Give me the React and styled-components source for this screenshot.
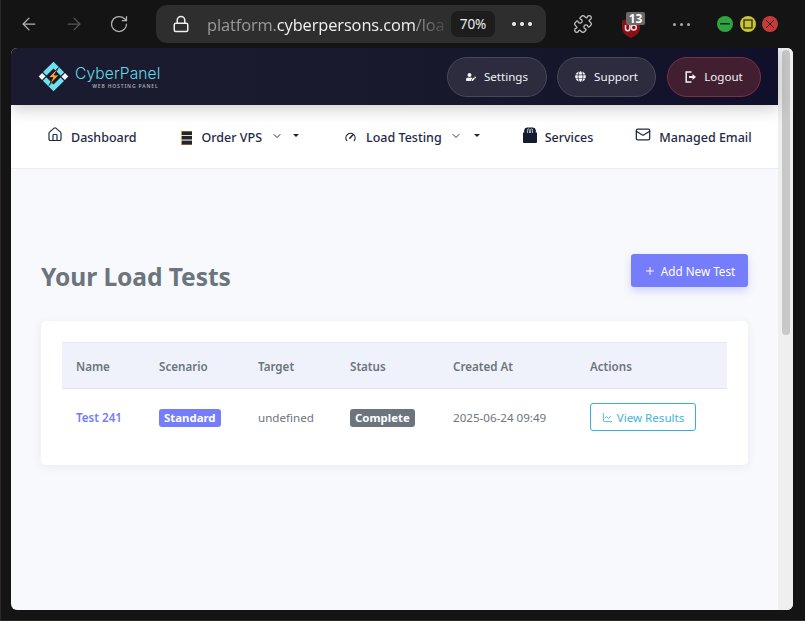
import React from 'react';
import styled, { createGlobalStyle } from 'styled-components';
import { ArrowLeft, ArrowRight, RotateCw, Lock, Puzzle, House, Mail, ChevronDown, Plus, ChartLine } from 'lucide-react';
import { FaUserEdit, FaGlobe } from 'react-icons/fa';

const Global = createGlobalStyle`
  html, body { margin: 0; padding: 0; background: #141414; overflow: hidden; }
  * { box-sizing: border-box; }
  body { font-family: "Noto Sans", "Open Sans", sans-serif; }
`;
const Screen = styled.div`
  width: 805px; height: 621px; background: #141414; display: flex; flex-direction: column;
  border-left: 1px solid #2a2a2a; border-bottom: 1px solid #2a2a2a; overflow: hidden;
`;
const Toolbar = styled.div`
  height: 48px; flex: none; display: flex; align-items: center; padding: 0 0 0 18px; color: #c4c4c4;
`;
const NavGlyph = styled.span`
  display: flex; width: 20px; margin-right: ${p => p.$gap}px; color: ${p => p.$color || '#b4b4b4'};
`;
const AddressBar = styled.div`
  width: 390px; height: 38px; background: #2e2e2e; border-radius: 11px;
  display: flex; align-items: center; padding: 0 16px 0 16px; flex: none; margin-left: 1px;
`;
const LockBox = styled.span`display: flex; color: #eee; margin-right: 17px;`;
const Url = styled.div`
  width: 238px; flex: none; white-space: nowrap; overflow: hidden; font-size: 16.4px; color: #9a9a9a; font-family: "Open Sans", sans-serif;
  letter-spacing: -0.1px;
  -webkit-mask-image: linear-gradient(to right, #000 88%, rgba(0,0,0,.2) 100%);
  mask-image: linear-gradient(to right, #000 88%, rgba(0,0,0,.2) 100%);
  b { font-weight: 400; color: #f0f0f0; }
`;
const ZoomPill = styled.div`
  margin-left: 6px; width: 44px; height: 26px; border-radius: 7px; background: #1d1d1d; color: #eee;
  font-size: 13.5px; display: flex; align-items: center; justify-content: center; flex: none;
`;
const Dots = styled.div`
  display: flex; gap: ${p => p.$gap}px; margin-left: ${p => p.$left}px; flex: none;
  i { display: block; width: ${p => p.$size}px; height: ${p => p.$size}px; border-radius: 50%; background: ${p => p.$color}; }
`;
const ExtIcon = styled.span`display: flex; margin-left: 27px; color: #c8c8c8; flex: none;`;
const Shield = styled.span`position: relative; display: flex; margin-left: 29px; flex: none; width: 18px; height: 20px; top: 4px;`;
const Badge = styled.span`
  position: absolute; top: -6px; left: 4px; width: 19px; height: 13px; background: #6a6a6a; color: #fff; border-radius: 2px;
  font-size: 12px; font-weight: 700; line-height: 13px; text-align: center;
`;
const WinButtons = styled.div`display: flex; margin-left: 27px; gap: 6.5px; flex: none;`;
const WinBtn = styled.span`
  width: 16px; height: 16px; border-radius: 50%; background: ${p => p.$bg}; display: flex; align-items: center; justify-content: center;
`;
const Frame = styled.div`
  margin-left: 10px; width: 782px; height: 562px; flex: none; border-radius: 6px; overflow: hidden; display: flex; background: #f8f9fc;
`;
const Page = styled.div`width: 767px; flex: none; display: flex; flex-direction: column;`;
const Scrollbar = styled.div`width: 15px; flex: none; background: #efefef; padding: 2px 3px 0 4px;`;
const Thumb = styled.div`height: 285px; background: #c8c8c8; border-radius: 4px;`;
const Header = styled.header`
  height: 57px; flex: none; background: linear-gradient(90deg, #1a1b30 0%, #1a1a2e 45%, #10102a 100%);
  display: flex; align-items: center; padding: 0 17px 0 27px; box-shadow: 0 4px 16px rgba(0,0,0,.2); position: relative; z-index: 1;
`;
const Logo = styled.div`display: flex; align-items: center; gap: 6px; margin-right: auto;`;
const LogoWords = styled.div`display: flex; flex-direction: column; align-items: flex-end; margin-top: 1px;`;
const LogoName = styled.span`font-family: "Inter", sans-serif; font-size: 15.6px; font-weight: 300; color: #66d9e8; line-height: 18px; letter-spacing: .1px;`;
const LogoSub = styled.span`font-size: 5px; font-weight: 600; letter-spacing: .85px; color: #a8a8b4; line-height: 7px; margin-right: 2px;`;
const Pills = styled.div`display: flex; gap: 10px;`;
const Pill = styled.a`
  height: 40px; width: ${p => p.$w}px; border-radius: 20px; display: flex; align-items: center; justify-content: center; gap: 8px;
  font-size: 11.6px; color: #f2f2f5;
  background: ${p => p.$danger ? '#421f30' : '#2c2c3e'}; border: 1px solid ${p => p.$danger ? '#7b2f45' : '#47475a'};
  margin-left: ${p => p.$left || 0}px;
`;
const Nav = styled.nav`
  height: 64px; flex: none; background: #fff; border-bottom: 1px solid #eceef2; display: flex; align-items: center; padding: 0 0 0 36px;
`;
const NavItem = styled.a`
  display: flex; align-items: center; font-size: 12.5px; font-weight: 500; margin: 2px ${p => p.$mr}px 0 0; color: #1e2a45; white-space: nowrap; line-height: 18px;
`;
const NavIcon = styled.span`display: flex; width: ${p => p.$w}px; margin-right: ${p => p.$mr}px; flex: none; position: relative; top: ${p => p.$top ?? -3}px;`;
const Chevron = styled.span`display: flex; margin-left: ${p => p.$ml}px; color: #333; position: relative; top: -2px;`;
const Caret = styled.span`
  margin-left: ${p => p.$ml}px; width: 0; height: 0; border-left: 3.5px solid transparent; border-right: 3.5px solid transparent; border-top: 3.5px solid #222;
  position: relative; top: -2px;
`;
const Main = styled.main`flex: 1; padding: 85px 30px 0 30px;`;
const TitleRow = styled.div`display: flex; justify-content: space-between; align-items: flex-start; margin-bottom: 28px;`;
const Title = styled.h1`margin: 7px 0 0; font-size: 24.6px; font-weight: 700; color: #6c757d; line-height: 32px; letter-spacing: -.1px;`;
const AddButton = styled.button`
  width: 117px; height: 33px; border: none; border-radius: 3px; background: #757dfb; color: #fff; font: inherit; font-size: 11.7px;
  display: flex; align-items: center; justify-content: center; gap: 5px; box-shadow: 0 4px 8px rgba(117,125,251,.3);
`;
const Card = styled.section`
  background: #fff; border-radius: 5px; padding: 21px; height: 144px; box-shadow: 0 2px 10px rgba(60,70,100,.08);
`;
const Table = styled.table`width: 665px; border-collapse: collapse; table-layout: fixed; font-size: 11.6px;`;
const Th = styled.th`
  width: ${p => p.$w}px; height: 46px; padding: 2px 0 0 14px; text-align: left; font-weight: 600; color: #6c757d; background: #eff2fa;
  border-top: 1px solid #e4e9f2; border-bottom: 1px solid #e0e6f0;
`;
const Td = styled.td`height: 58px; padding: 0 0 0 14px; color: #6c757d; white-space: nowrap;`;
const TestLink = styled.a`color: #757dfb; font-weight: 600;`;
const Tag = styled.span`
  display: inline-block; padding: 0 5px; height: 18px; line-height: 18px; border-radius: 3px; font-size: 11.4px; font-weight: 700; color: #fff; background: ${p => p.$bg};
`;
const ResultsButton = styled.a`
  display: inline-flex; vertical-align: middle; margin-top: -1px; align-items: center; gap: 4px; width: 106px; height: 28px; justify-content: center; border: 1px solid #36b0d4; border-radius: 3px; color: #45b4d6; font-size: 11.6px;
`;

const ServerIcon = () => (
  <svg width="11" height="14" viewBox="0 0 11 14">
    <rect x="0" y="0" width="11" height="14" fill="#e8923c" />
    <rect x="1" y="0.5" width="10" height="3.6" fill="#1e2533" />
    <rect x="1" y="5" width="10" height="3.6" fill="#1e2533" />
    <rect x="1" y="9.5" width="10" height="4" fill="#1e2533" />
    <rect x="0" y="4.2" width="11" height=".7" fill="#fff" />
    <rect x="0" y="8.7" width="11" height=".7" fill="#fff" />
  </svg>
);
const GaugeIcon = () => (
  <svg width="12" height="12" viewBox="0 0 12 12" fill="none" stroke="#1e2533">
    <path d="M2.2 10.3A5 5 0 1 1 9.8 10.3" strokeWidth="1.3" />
    <path d="M5.2 7.4 8.4 3.8" strokeWidth="1.6" strokeLinecap="round" />
  </svg>
);
const BagIcon = () => (
  <svg width="14" height="16" viewBox="0 0 14 16">
    <path d="M0 5.5h14V15a1 1 0 0 1-1 1H1a1 1 0 0 1-1-1z" fill="#141b2e" />
    <path d="M1.2 6V3.2A3 3 0 0 1 4 .5h6a3 3 0 0 1 2.8 2.7V6" fill="#141b2e" />
    <path d="M4.4 6V3.5Q4.4 1.8 5.4 1.8T6.4 3.5V6M7.6 6V3.5Q7.6 1.8 8.6 1.8T9.6 3.5V6" fill="none" stroke="#fff" strokeWidth=".7" />
  </svg>
);
const LogoMark = () => (
  <svg width="31" height="31" viewBox="0 0 31 31">
    <g transform="rotate(45 15.5 15.5)">
      <path d="M5 5h15v4.800H9.800v10H5z" fill="#6fe0ee" />
      <path d="M26 26H11v-4.800h10.200v-10H26z" fill="#6fe0ee" />
      <path d="M5 21h4.800v5H5zM21.200 5H26v5h-4.800z" fill="#eafafc" />
    </g>
    <path d="M20.500 6.500 10.500 16.500h4.500l-4 8 10-10.500h-4.700z" fill="#f5a81c" stroke="#14142a" strokeWidth=".8" />
  </svg>
);
const ShieldIcon = () => (
  <svg width="18" height="20" viewBox="0 0 18 20">
    <path d="M9 0 18 2.500V10Q18 16 9 20 0 16 0 10V2.500z" fill="#8a1016" />
    <path d="M3.500 7v3.500a2.200 2.200 0 0 0 4.400 0V7" fill="none" stroke="#f3dcdc" strokeWidth="1.500" />
    <circle cx="11.800" cy="9.500" r="2.500" fill="none" stroke="#f3dcdc" strokeWidth="1.500" />
  </svg>
);
const DoorIcon = () => (
  <svg width="11" height="12" viewBox="0 0 11 12">
    <path d="M6.500 1H1.200v10H6.500" fill="none" stroke="#f4f4f6" strokeWidth="1.500" />
    <path d="M4 5h3.500V3L11 6 7.500 9V7H4z" fill="#f4f4f6" />
  </svg>
);

export default function App() {
  return (
    <>
      <Global />
      <Screen>
        <Toolbar>
          <NavGlyph $gap={25}><ArrowLeft size={20} strokeWidth={1.5} /></NavGlyph>
          <NavGlyph $gap={25} $color="#555"><ArrowRight size={20} strokeWidth={1.5} /></NavGlyph>
          <NavGlyph $gap={26}><RotateCw size={20} strokeWidth={1.5} /></NavGlyph>
          <AddressBar>
            <LockBox><Lock size={18} strokeWidth={2} /></LockBox>
            <Url>platform.<b>cyberpersons.com</b>/loa</Url>
            <ZoomPill>70%</ZoomPill>
            <Dots $gap={4} $left={17} $size={4} $color="#f0f0f0"><i /><i /><i /></Dots>
          </AddressBar>
          <ExtIcon><Puzzle size={20} strokeWidth={1.5} /></ExtIcon>
          <Shield><ShieldIcon /><Badge>13</Badge></Shield>
          <Dots $gap={4} $left={33} $size={3} $color="#aaa"><i /><i /><i /></Dots>
          <WinButtons>
            <WinBtn $bg="#2fa53d"><svg width="10" height="2"><rect width="10" height="1.500" fill="#123" /></svg></WinBtn>
            <WinBtn $bg="#c9c435"><svg width="10" height="10"><rect x="1" y="1" width="8" height="8" fill="none" stroke="#222" strokeWidth="1.200" /></svg></WinBtn>
            <WinBtn $bg="#c43b3b"><svg width="10" height="10"><path d="M1 1l8 8M9 1l-8 8" stroke="#411" strokeWidth="1" /></svg></WinBtn>
          </WinButtons>
        </Toolbar>
        <Frame>
          <Page>
            <Header>
              <Logo>
                <LogoMark />
                <LogoWords>
                  <LogoName>CyberPanel</LogoName>
                  <LogoSub>WEB HOSTING PANEL</LogoSub>
                </LogoWords>
              </Logo>
              <Pills>
                <Pill $w={100}><FaUserEdit size={10} />Settings</Pill>
                <Pill $w={99}><FaGlobe size={11} />Support</Pill>
                <Pill $w={94} $danger $left={1}><DoorIcon />Logout</Pill>
              </Pills>
            </Header>
            <Nav>
              <NavItem $mr={44}><NavIcon $w={16} $mr={8}><House size={17} strokeWidth={1.8} /></NavIcon>Dashboard</NavItem>
              <NavItem $mr={46}><NavIcon $w={11} $mr={10} $top={0}><ServerIcon /></NavIcon>Order VPS<Chevron $ml={9}><ChevronDown size={12} strokeWidth={2} /></Chevron><Caret $ml={10} /></NavItem>
              <NavItem $mr={43}><NavIcon $w={11} $mr={10} $top={-1}><GaugeIcon /></NavIcon>Load Testing<Chevron $ml={8}><ChevronDown size={12} strokeWidth={2} /></Chevron><Caret $ml={12} /></NavItem>
              <NavItem $mr={42}><NavIcon $w={14} $mr={8}><BagIcon /></NavIcon>Services</NavItem>
              <NavItem $mr={0}><NavIcon $w={16} $mr={8}><Mail size={17} strokeWidth={1.9} /></NavIcon>Managed Email</NavItem>
            </Nav>
            <Main>
              <TitleRow>
                <Title>Your Load Tests</Title>
                <AddButton><Plus size={12} />Add New Test</AddButton>
              </TitleRow>
              <Card>
                <Table>
                  <thead>
                    <tr>
                      <Th $w={83}>Name</Th>
                      <Th $w={99}>Scenario</Th>
                      <Th $w={92}>Target</Th>
                      <Th $w={103}>Status</Th>
                      <Th $w={137}>Created At</Th>
                      <Th $w={151}>Actions</Th>
                    </tr>
                  </thead>
                  <tbody>
                    <tr>
                      <Td><TestLink>Test 241</TestLink></Td>
                      <Td><Tag $bg="#757dfb">Standard</Tag></Td>
                      <Td>undefined</Td>
                      <Td><Tag $bg="#6c757d">Complete</Tag></Td>
                      <Td>2025-06-24 09:49</Td>
                      <Td><ResultsButton><ChartLine size={11} />View Results</ResultsButton></Td>
                    </tr>
                  </tbody>
                </Table>
              </Card>
            </Main>
          </Page>
          <Scrollbar><Thumb /></Scrollbar>
        </Frame>
      </Screen>
    </>
  );
}
